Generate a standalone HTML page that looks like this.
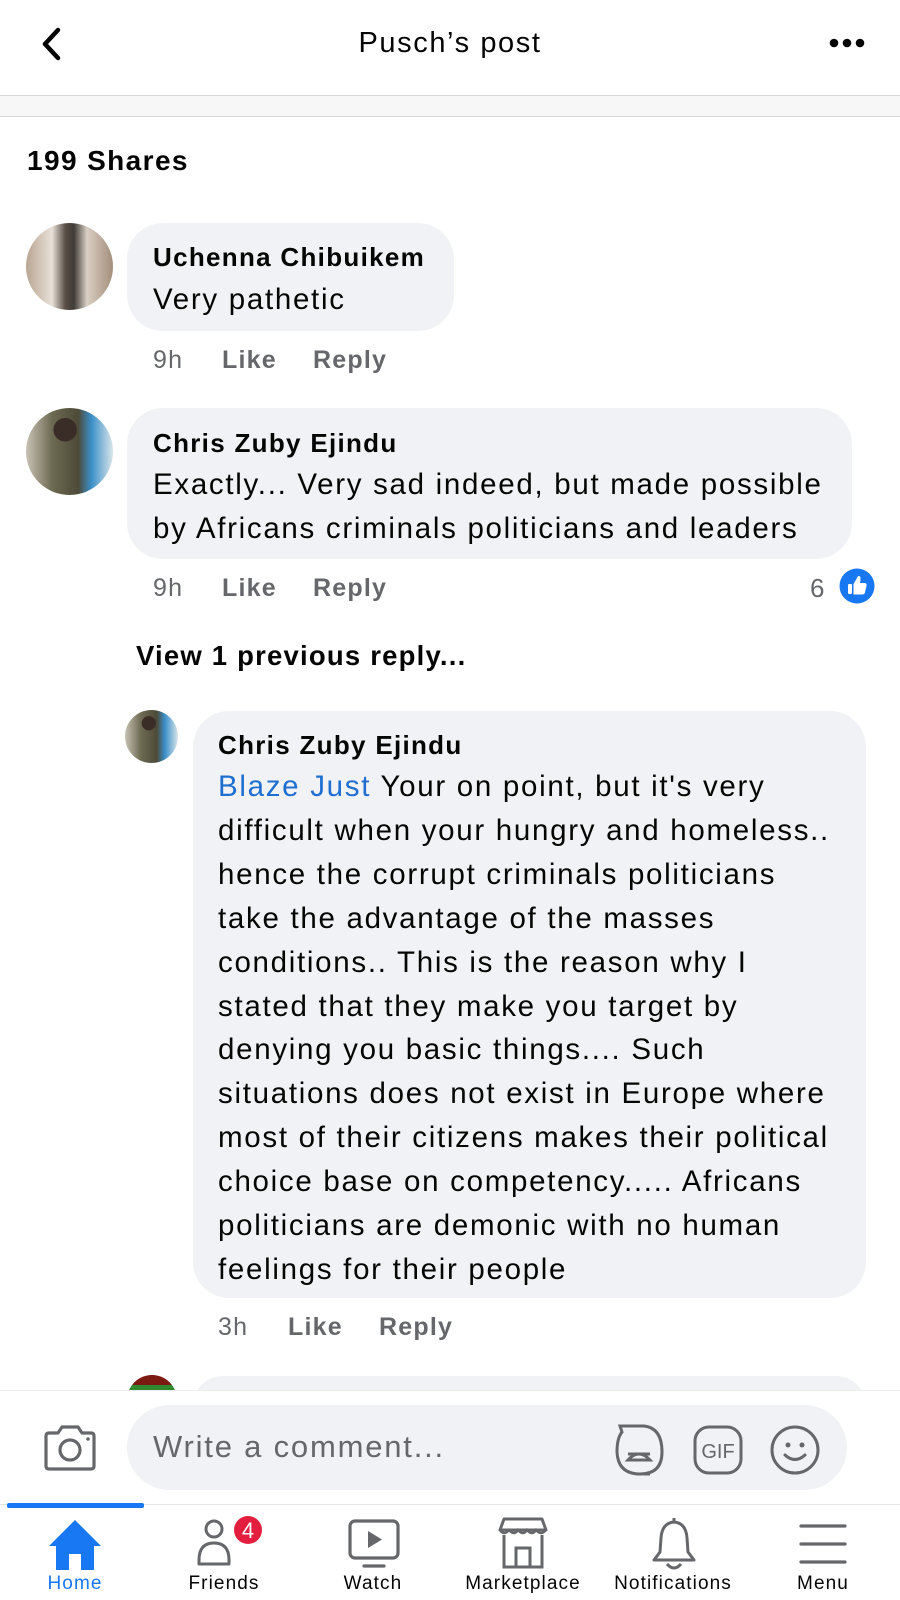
<!DOCTYPE html>
<html><head><meta charset="utf-8"><style>
*{margin:0;padding:0;box-sizing:border-box}
body{width:900px;height:1600px;background:#fff;font-family:"Liberation Sans",Arial,sans-serif;color:#050505;position:relative;overflow:hidden}
.a{position:absolute}
.t{position:absolute;white-space:nowrap}
.bub{position:absolute;background:#f0f2f5;border-radius:36px}
.name{font-weight:bold;font-size:26px;letter-spacing:1.3px}
.txt{font-size:29.5px;line-height:43.9px;letter-spacing:1.7px}
.meta{font-size:25px;color:#65676b;font-weight:bold;letter-spacing:1.2px}
.av{position:absolute;border-radius:50%;overflow:hidden}
.nav{position:absolute;top:1573px;font-size:19px;color:#050505;text-align:center;width:150px;letter-spacing:1.1px}
</style></head><body>
<!-- header -->
<svg class="a" style="left:38px;top:26px" width="26" height="36" viewBox="0 0 26 36"><path d="M20 4 L7 18 L20 32" fill="none" stroke="#050505" stroke-width="4.5" stroke-linecap="round" stroke-linejoin="round"/></svg>
<div class="t" style="left:0;width:900px;text-align:center;top:27px;font-size:29px;letter-spacing:1.6px">Pusch’s post</div>
<svg class="a" style="left:828px;top:36px" width="40" height="14"><circle cx="6" cy="7" r="4.3" fill="#050505"/><circle cx="19" cy="7" r="4.3" fill="#050505"/><circle cx="32" cy="7" r="4.3" fill="#050505"/></svg>
<div class="a" style="left:0;top:95px;width:900px;height:22px;background:#f7f7f7;border-top:1px solid #d8d8d8;border-bottom:1px solid #d8d8d8"></div>
<div class="t" style="left:27px;top:145px;font-size:28px;font-weight:bold;letter-spacing:1.4px">199 Shares</div>

<!-- comment 1 -->
<div class="av" style="left:26px;top:223px;width:87px;height:87px;background:linear-gradient(90deg,#b9a592 0%,#e8e1d8 30%,#5a5047 45%,#3e3a36 55%,#d9cfc4 70%,#a48e7a 100%)"></div>
<div class="bub" style="left:127px;top:223px;width:327px;height:108px"></div>
<div class="t name" style="left:153px;top:242px">Uchenna Chibuikem</div>
<div class="t txt" style="left:153px;top:278px">Very pathetic</div>
<div class="t meta" style="left:153px;top:346px;font-weight:normal">9h</div>
<div class="t meta" style="left:222px;top:346px">Like</div>
<div class="t meta" style="left:313px;top:346px">Reply</div>

<!-- comment 2 -->
<div class="av" style="left:26px;top:408px;width:87px;height:87px;background:radial-gradient(circle at 45% 25%,#3a2c26 0 14%,transparent 15%),linear-gradient(90deg,#c8c2b4 0%,#6d6a52 30%,#4d4a38 60%,#3a8fc8 75%,#d9e6ea 100%)"></div>
<div class="bub" style="left:127px;top:408px;width:725px;height:151px"></div>
<div class="t name" style="left:153px;top:428px">Chris Zuby Ejindu</div>
<div class="t txt" style="left:153px;top:463px">Exactly... Very sad indeed, but made possible<br>by Africans criminals politicians and leaders</div>
<div class="t meta" style="left:153px;top:574px;font-weight:normal">9h</div>
<div class="t meta" style="left:222px;top:574px">Like</div>
<div class="t meta" style="left:313px;top:574px">Reply</div>
<div class="t" style="left:810px;top:573px;font-size:26px;color:#65676b">6</div>
<svg class="a" style="left:839px;top:568px" width="36" height="36" viewBox="0 0 36 36"><circle cx="18" cy="18" r="17.5" fill="#1877f2"/><rect x="9" y="16" width="4" height="10" rx="1" fill="#fff"/><path d="M14.5 16 L18 10 Q19 7 21 8.5 Q22 10 21 15 L26 15 Q28 15.5 27.5 18 L26 24.5 Q25.5 26.5 23 26.5 L14.5 26.5 Z" fill="#fff"/></svg>

<div class="t" style="left:136px;top:640px;font-size:27.5px;font-weight:bold;letter-spacing:1.2px">View 1 previous reply...</div>

<!-- reply -->
<div class="av" style="left:125px;top:710px;width:53px;height:53px;background:radial-gradient(circle at 45% 25%,#3a2c26 0 14%,transparent 15%),linear-gradient(90deg,#c8c2b4 0%,#6d6a52 30%,#4d4a38 60%,#3a8fc8 75%,#d9e6ea 100%)"></div>
<div class="bub" style="left:193px;top:711px;width:673px;height:587px"></div>
<div class="t name" style="left:218px;top:730px">Chris Zuby Ejindu</div>
<div class="t txt" style="left:218px;top:765px"><span style="color:#1f6fd1">Blaze Just</span> Your on point, but it's very<br>difficult when your hungry and homeless..<br>hence the corrupt criminals politicians<br>take the advantage of the masses<br>conditions.. This is the reason why I<br>stated that they make you target by<br>denying you basic things.... Such<br>situations does not exist in Europe where<br>most of their citizens makes their political<br>choice base on competency..... Africans<br>politicians are demonic with no human<br>feelings for their people</div>
<div class="t meta" style="left:218px;top:1313px;font-weight:normal">3h</div>
<div class="t meta" style="left:288px;top:1313px">Like</div>
<div class="t meta" style="left:379px;top:1313px">Reply</div>

<!-- partial next -->
<div class="av" style="left:127px;top:1375px;width:50px;height:50px;background:linear-gradient(180deg,#7a1a10 0 20%,#2f8a2f 20% 40%,#f0d020 40% 55%,#111 55%)"></div>
<div class="bub" style="left:193px;top:1376px;width:673px;height:60px"></div>

<!-- composer -->
<div class="a" style="left:0;top:1390px;width:900px;height:114px;background:#fff;border-top:1px solid #ececec"></div>
<svg class="a" style="left:42px;top:1424px" width="56" height="48" viewBox="0 0 56 48"><path d="M4 12 Q4 9 7 9 L16 9 L20 3 L36 3 L40 9 L49 9 Q52 9 52 12 L52 42 Q52 45 49 45 L7 45 Q4 45 4 42 Z" fill="none" stroke="#65676b" stroke-width="3.2" stroke-linejoin="round"/><circle cx="28" cy="26" r="10" fill="none" stroke="#65676b" stroke-width="3.2"/><circle cx="46" cy="15" r="1.8" fill="#65676b"/></svg>
<div class="a" style="left:127px;top:1405px;width:720px;height:85px;background:#f0f2f5;border-radius:43px"></div>
<div class="t" style="left:153px;top:1429px;font-size:31px;color:#65676b;letter-spacing:1.8px">Write a comment...</div>
<svg class="a" style="left:610px;top:1422px" width="58" height="56" viewBox="0 0 58 56"><path d="M10 4 L34 4 Q52 6 52 30 Q52 52 30 52 Q8 52 7 30 Q7 16 12 10 Z M34 52 L40 52" fill="none" stroke="#65676b" stroke-width="3"/><path d="M18 38 Q29 26 40 38 Z" fill="none" stroke="#65676b" stroke-width="3"/><path d="M18 32 L40 32" stroke="#65676b" stroke-width="3"/></svg>
<svg class="a" style="left:692px;top:1424px" width="52" height="52" viewBox="0 0 52 52"><rect x="3" y="3" width="46" height="46" rx="14" fill="none" stroke="#65676b" stroke-width="3"/><text x="26" y="34" font-family="Liberation Sans" font-size="20" fill="#65676b" text-anchor="middle">GIF</text></svg>
<svg class="a" style="left:769px;top:1424px" width="52" height="52" viewBox="0 0 52 52"><circle cx="26" cy="26" r="23" fill="none" stroke="#65676b" stroke-width="3"/><circle cx="19" cy="21" r="2.5" fill="#65676b"/><circle cx="33" cy="21" r="2.5" fill="#65676b"/><path d="M16 31 Q26 40 36 31" fill="none" stroke="#65676b" stroke-width="3" stroke-linecap="round"/></svg>

<!-- nav -->
<div class="a" style="left:0;top:1504px;width:900px;height:96px;background:#fff;border-top:1px solid #e4e4e4"></div>
<div class="a" style="left:7px;top:1503px;width:137px;height:5px;background:#1877f2;border-radius:2px"></div>
<svg class="a" style="left:47px;top:1516px" width="56" height="56" viewBox="0 0 56 56"><path d="M28 4 L54 30 L47 30 L47 54 L34 54 L34 38 L22 38 L22 54 L9 54 L9 30 L2 30 Z" fill="#1877f2"/></svg>
<svg class="a" style="left:196px;top:1516px" width="70" height="56" viewBox="0 0 70 56"><circle cx="18" cy="13" r="8" fill="none" stroke="#65676b" stroke-width="3"/><path d="M3 44 Q3 27 18 27 Q33 27 33 44 L33 48 L3 48 Z" fill="none" stroke="#65676b" stroke-width="3" stroke-linejoin="round"/><circle cx="52" cy="14" r="14" fill="#e41e3f"/><text x="52" y="22" font-family="Liberation Sans" font-size="22" fill="#fff" text-anchor="middle">4</text></svg>
<svg class="a" style="left:348px;top:1519px" width="52" height="50" viewBox="0 0 52 50"><rect x="2" y="2" width="48" height="37" rx="5" fill="none" stroke="#65676b" stroke-width="3.2"/><path d="M20 12 L34 20.5 L20 29 Z" fill="#65676b"/><path d="M16 47 L36 47" stroke="#65676b" stroke-width="3.2" stroke-linecap="round"/></svg>
<svg class="a" style="left:496px;top:1516px" width="54" height="54" viewBox="0 0 54 54"><path d="M8 3 L46 3 L50 14 L4 14 Z" fill="none" stroke="#65676b" stroke-width="3" stroke-linejoin="round"/><path d="M4 14 Q8 20 13 14 Q18 20 22 14 Q27 20 31 14 Q36 20 40 14 Q45 20 50 14" fill="none" stroke="#65676b" stroke-width="2.5"/><path d="M8 19 L8 51 L46 51 L46 19" fill="none" stroke="#65676b" stroke-width="3"/><rect x="20" y="32" width="14" height="19" fill="none" stroke="#65676b" stroke-width="3"/></svg>
<svg class="a" style="left:650px;top:1514px" width="48" height="60" viewBox="0 0 48 60"><path d="M24 4 L24 8 M24 8 Q12 9 11 24 L10 38 L4 46 L44 46 L38 38 L37 24 Q36 9 24 8 Z" fill="none" stroke="#65676b" stroke-width="3" stroke-linejoin="round"/><path d="M17 50 Q24 58 31 50" fill="none" stroke="#65676b" stroke-width="3"/></svg>
<svg class="a" style="left:798px;top:1522px" width="50" height="44" viewBox="0 0 50 44"><path d="M3 4 L47 4 M3 22 L47 22 M3 40 L47 40" stroke="#65676b" stroke-width="3.2" stroke-linecap="round"/></svg>
<div class="nav" style="left:0;color:#1877f2">Home</div>
<div class="nav" style="left:149px">Friends</div>
<div class="nav" style="left:298px">Watch</div>
<div class="nav" style="left:448px">Marketplace</div>
<div class="nav" style="left:598px">Notifications</div>
<div class="nav" style="left:748px">Menu</div>
</body></html>
